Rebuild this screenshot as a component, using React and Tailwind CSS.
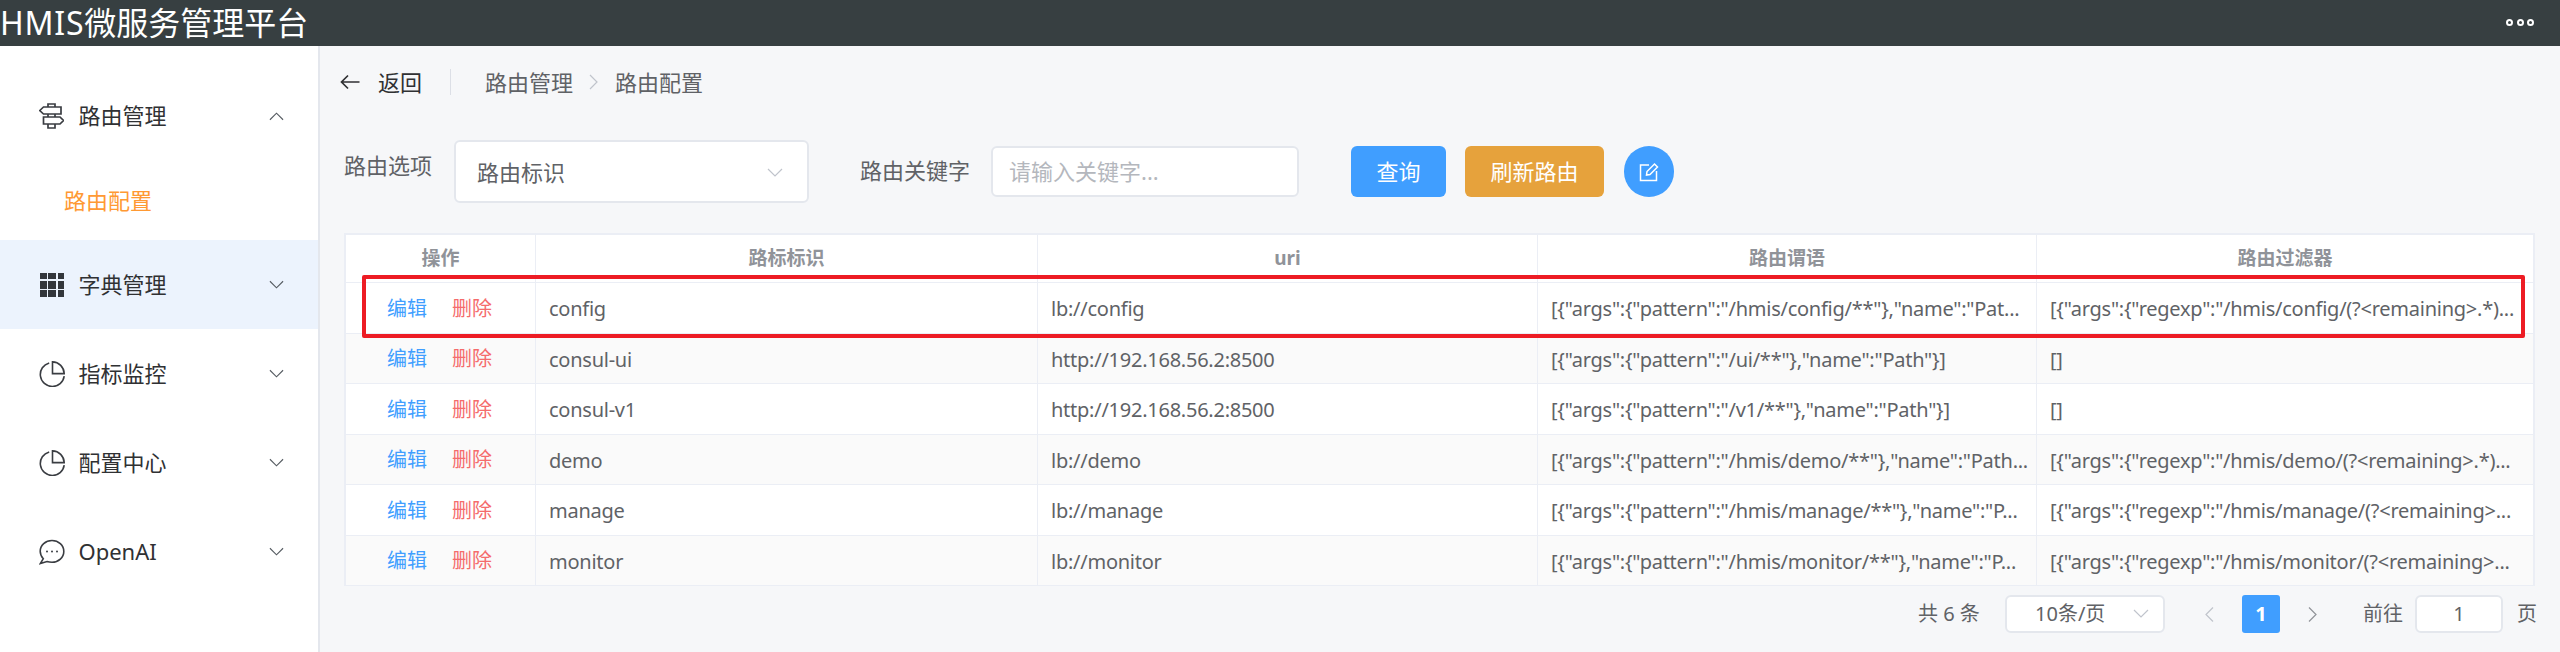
import React from "react";

const FONT = "font-['Noto_Sans','Noto_Sans_CJK_SC',sans-serif]";

function Chevron({ up, className = "" }) {
  return (
    <svg viewBox="0 0 16 10" className={`${className} shrink-0`} fill="none" stroke="currentColor" strokeWidth="1.2">
      <path d={up ? "M1 9 L8 2 L15 9" : "M1 1 L8 8 L15 1"} />
    </svg>
  );
}

function ChevronSide({ left, className = "" }) {
  return (
    <svg viewBox="0 0 10 16" className={`${className} shrink-0`} fill="none" stroke="currentColor" strokeWidth="1.2">
      <path d={left ? "M9 1 L2 8 L9 15" : "M1 1 L8 8 L1 15"} />
    </svg>
  );
}

function SignIcon() {
  return (
    <svg viewBox="0 0 25 26" className="w-[25px] h-[26px]" fill="none" stroke="#3a3d42" strokeWidth="1.7">
      <path d="M0.8 7.5L4.5 4H22V11H4.5Z" />
      <path d="M4.5 14H21L24.5 17.5L21 21H4.5Z" />
      <path d="M9 4V1H16V4M9 11V14M16 11V14M9 21V25H16V21" />
    </svg>
  );
}

function GridIcon() {
  const cells = [0, 1, 2, 3, 4, 5, 6, 7, 8];
  return (
    <span className="w-[24px] h-[24px] grid grid-cols-[6.5px_8px_6.5px] grid-rows-[6.5px_8px_6.5px] gap-[1.5px] ml-[1px]">
      {cells.map((c) => (
        <span key={c} className="bg-[#33363b]" />
      ))}
    </span>
  );
}

function PieIcon() {
  return (
    <svg viewBox="0 0 26 26" className="w-[26px] h-[26px]" fill="none" stroke="#3a3d42" strokeWidth="1.6">
      <path d="M10.2 1.9A12 12 0 1 0 25.2 15.2" />
      <path d="M13.5 0.9A12 12 0 0 1 25.2 12.6H13.5Z" />
    </svg>
  );
}

function ChatIcon() {
  return (
    <svg viewBox="0 0 26 26" className="w-[26px] h-[26px]" fill="none" stroke="#3a3d42" strokeWidth="1.6">
      <path d="M13 1.5C6.5 1.5 1.2 6.2 1.2 12.3C1.2 15.3 2.5 17.8 4.3 19.7L1.4 24.5L8 22.5C9.5 23 11.2 23.2 13 23.2C19.5 23.2 24.8 18.4 24.8 12.4C24.8 6.3 19.5 1.5 13 1.5Z" />
      <circle cx="8" cy="12.5" r="1" fill="#3a3d42" stroke="none" />
      <circle cx="13" cy="12.5" r="1" fill="#3a3d42" stroke="none" />
      <circle cx="18" cy="12.5" r="1" fill="#3a3d42" stroke="none" />
    </svg>
  );
}

function MenuItem({ icon, label, up, active }) {
  return (
    <div className={`h-[89px] flex items-center pl-[39px] pr-[34px] ${active ? "bg-[#ecf3fd]" : ""}`}>
      <span className="w-[39.5px] flex items-center">{icon}</span>
      <span className="text-[22px] text-[#303133] flex-1">{label}</span>
      <Chevron up={up} className="w-[15px] h-[10px] text-[#555b61]" />
    </div>
  );
}

const rows = [
  ["config", "lb://config", '[{"args":{"pattern":"/hmis/config/**"},"name":"Pat...', '[{"args":{"regexp":"/hmis/config/(?<remaining>.*)...'],
  ["consul-ui", "http://192.168.56.2:8500", '[{"args":{"pattern":"/ui/**"},"name":"Path"}]', "[]"],
  ["consul-v1", "http://192.168.56.2:8500", '[{"args":{"pattern":"/v1/**"},"name":"Path"}]', "[]"],
  ["demo", "lb://demo", '[{"args":{"pattern":"/hmis/demo/**"},"name":"Path...', '[{"args":{"regexp":"/hmis/demo/(?<remaining>.*)...'],
  ["manage", "lb://manage", '[{"args":{"pattern":"/hmis/manage/**"},"name":"P...', '[{"args":{"regexp":"/hmis/manage/(?<remaining>...'],
  ["monitor", "lb://monitor", '[{"args":{"pattern":"/hmis/monitor/**"},"name":"P...', '[{"args":{"regexp":"/hmis/monitor/(?<remaining>...'],
];

function HeadCell({ className, children }) {
  return (
    <div className={`${className} flex items-center justify-center text-[19px] font-bold text-[#909399] border-r border-[#ebeef5] last:border-r-0`}>
      {children}
    </div>
  );
}

function Cell({ className, children }) {
  return (
    <div className={`${className} px-[13px] whitespace-nowrap tracking-[-0.25px] text-[20px] leading-[52px] h-full text-[#606266] border-r border-[#ebeef5] last:border-r-0`}>
      {children}
    </div>
  );
}

export default function App() {
  return (
    <div className={`${FONT} w-[2560px] h-[652px] flex flex-col overflow-hidden bg-[#f6f7f9] relative`}>
      <header className="h-[46px] bg-[#373f41] flex items-center justify-between pr-[26px] shrink-0">
        <span className="text-[32px] text-white leading-none">
          <span className="tracking-[0.8px]">HMIS</span>微服务管理平台
        </span>
        <span className="flex gap-[3.5px] -mt-[2px]">
          <span className="w-[7px] h-[7px] rounded-full border-[2.5px] border-white" />
          <span className="w-[7px] h-[7px] rounded-full border-[2.5px] border-white" />
          <span className="w-[7px] h-[7px] rounded-full border-[2.5px] border-white" />
        </span>
      </header>
      <div className="flex flex-1 min-h-0">
        <aside className="w-[320px] bg-white border-r-2 border-[#e4e7ed] pt-[25px] shrink-0">
          <MenuItem icon={<SignIcon />} label="路由管理" up />
          <div className="h-[80px] flex items-center pl-[64px] text-[22px] text-[#ff9933]">路由配置</div>
          <MenuItem icon={<GridIcon />} label="字典管理" active />
          <MenuItem icon={<PieIcon />} label="指标监控" />
          <MenuItem icon={<PieIcon />} label="配置中心" />
          <MenuItem icon={<ChatIcon />} label="OpenAI" />
        </aside>
        <main className="flex-1 min-w-0 pl-[24px] pr-[25px]">
          <div className="h-[72px] flex items-center">
            <svg viewBox="0 0 20 16" className="w-[20px] h-[16px] mr-[18px] -ml-[4px] shrink-0" fill="none" stroke="#303133" strokeWidth="1.7">
              <path d="M19.5 8H1.5M8 1.5L1.5 8L8 14.5" />
            </svg>
            <span className="text-[22px] text-[#303133]">返回</span>
            <span className="w-px h-[26px] bg-[#dcdfe6] ml-[28px] mr-[34px]" />
            <span className="text-[22px] text-[#606266]">路由管理</span>
            <ChevronSide className="w-[10px] h-[16px] mx-[16px] text-[#c0c4cc]" />
            <span className="text-[22px] text-[#606266]">路由配置</span>
          </div>
          <div className="h-[115px] flex items-start pt-[22px]">
            <span className="text-[22px] text-[#606266] w-[110px] mt-[9px] shrink-0">路由选项</span>
            <div className="w-[355px] h-[63px] bg-white border-2 border-[#e4e7ed] rounded-[6px] flex items-center justify-between pl-[21px] pr-[24px] pt-[2px] shrink-0">
              <span className="text-[22px] text-[#606266]">路由标识</span>
              <Chevron className="w-[16px] h-[10px] text-[#c0c4cc]" />
            </div>
            <span className="text-[22px] text-[#606266] ml-[51px] w-[131px] mt-[14px] shrink-0">路由关键字</span>
            <div className="w-[308px] h-[51px] bg-white border-2 border-[#e4e7ed] rounded-[6px] flex items-center px-[16px] mt-[6px] shrink-0">
              <span className="text-[22px] text-[#b4b7bd]">请输入关键字...</span>
            </div>
            <button className="ml-[52px] w-[95px] h-[51px] mt-[6px] bg-[#409eff] rounded-[6px] text-[22px] text-white shrink-0">查询</button>
            <button className="ml-[19px] w-[139px] h-[51px] mt-[6px] bg-[#e6a23c] rounded-[6px] text-[22px] text-white shrink-0">刷新路由</button>
            <button className="ml-[20px] w-[50px] h-[51px] mt-[6px] bg-[#409eff] rounded-full flex items-center justify-center shrink-0">
              <svg viewBox="0 0 20 20" className="w-[20px] h-[20px]" fill="none" stroke="#fff" strokeWidth="1.5">
                <path d="M10 3H1.5V18.5H17.5V9" />
                <path d="M7.5 13L8 9.5L15.5 2L18.5 5L11 12.5Z" />
              </svg>
            </button>
          </div>
          <div className="w-[2191px] border-2 border-b-0 border-[#ebeef5] bg-white">
            <div className="h-[48px] flex border-b border-[#ebeef5]">
              <HeadCell className="w-[190px]">操作</HeadCell>
              <HeadCell className="w-[502px]">路标标识</HeadCell>
              <HeadCell className="w-[500px]">uri</HeadCell>
              <HeadCell className="w-[499px]">路由谓语</HeadCell>
              <HeadCell className="flex-1">路由过滤器</HeadCell>
            </div>
            {rows.map((r, i) => (
              <div key={r[0]} className={`h-[50.5px] flex items-center border-b border-[#ebeef5] ${i % 2 ? "bg-[#fafafa]" : "bg-white"}`}>
                <div className="w-[190px] h-full flex items-center justify-center gap-[25px] text-[20px] border-r border-[#ebeef5] pt-[2px] pr-[2px]">
                  <span className="text-[#409eff]">编辑</span>
                  <span className="text-[#f56c6c]">删除</span>
                </div>
                <Cell className="w-[502px]">{r[0]}</Cell>
                <Cell className="w-[500px]">{r[1]}</Cell>
                <Cell className="w-[499px]">{r[2]}</Cell>
                <Cell className="flex-1 min-w-0">{r[3]}</Cell>
              </div>
            ))}
          </div>
          <div className="w-[2191px] flex items-center mt-[9px] h-[38px] text-[20px] text-[#606266]">
            <span className="ml-[1574px] w-[87px] whitespace-pre shrink-0">共 6 条</span>
            <div className="w-[160px] h-[38px] bg-white border-2 border-[#e4e7ed] rounded-[6px] flex items-center justify-between pl-[28px] pr-[14px] shrink-0">
              <span>10条/页</span>
              <Chevron className="w-[16px] h-[10px] text-[#c0c4cc]" />
            </div>
            <ChevronSide left className="w-[10px] h-[17px] ml-[39px] text-[#c0c4cc]" />
            <span className="w-[38px] h-[38px] ml-[28px] bg-[#409eff] rounded-[3px] text-white font-bold flex items-center justify-center shrink-0">1</span>
            <ChevronSide className="w-[10px] h-[17px] ml-[28px] text-[#909399]" />
            <span className="ml-[45px] whitespace-nowrap shrink-0">前往</span>
            <div className="w-[88px] h-[38px] ml-[12px] bg-white border-2 border-[#e4e7ed] rounded-[6px] flex items-center justify-center shrink-0">1</div>
            <span className="ml-[14px] whitespace-nowrap shrink-0">页</span>
          </div>
        </main>
      </div>
      <div className="absolute left-[362px] top-[275px] w-[2163px] h-[63px] border-4 border-[#ed1c24] rounded-[2px] pointer-events-none" />
    </div>
  );
}
